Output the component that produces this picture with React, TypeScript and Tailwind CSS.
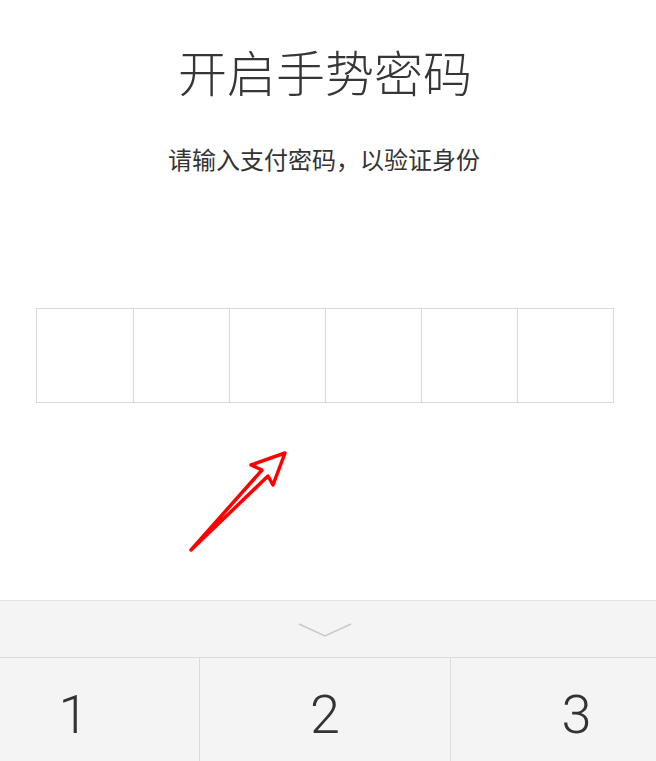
import React from 'react';

const cells = [0, 1, 2, 3, 4, 5];

export default function App() {
  return (
    <div
      className="relative w-[656px] h-[761px] overflow-hidden bg-white flex flex-col"
      style={{ fontFamily: '"Noto Sans CJK SC", "Noto Sans", sans-serif' }}
    >
      <h1 className="mt-[46px] pr-[6px] text-center text-[49px] leading-none font-light text-[#363636]">
        开启手势密码
      </h1>
      <p className="mt-[52px] pr-[8px] text-center text-[24px] leading-none text-[#333]">
        请输入支付密码，以验证身份
      </p>

      {/* password cells */}
      <div className="mt-[137px] ml-[36px] w-[578px] h-[95px] grid grid-cols-6 border border-[#dadada]">
        {cells.map((i) => (
          <div key={i} className={i === 0 ? '' : 'border-l border-[#dadada]'} />
        ))}
      </div>

      {/* keyboard */}
      <div className="mt-auto h-[161px] bg-[#f4f4f4] border-t border-[#e2e2e2] flex flex-col">
        <div className="h-[56px] flex items-center justify-center pr-[6px]">
          <svg width="56" height="18" viewBox="0 0 56 18" fill="none">
            <path d="M2 4 L28 16 L54 4" stroke="#c9c9c9" strokeWidth="1.5" />
          </svg>
        </div>
        <div
          className="flex-1 grid grid-cols-[199px_251px_1fr] border-t border-[#dcdcdc] text-[54px] font-light text-[#333]"
          style={{ fontFamily: 'Roboto, "Noto Sans", sans-serif' }}
        >
          <div className="flex items-center justify-center pr-[52px] pt-[10px]">1</div>
          <div className="flex items-center justify-center border-l border-[#dcdcdc] pt-[10px]">2</div>
          <div className="flex items-center justify-center border-l border-[#dcdcdc] pl-[46px] pt-[10px]">3</div>
        </div>
      </div>

      {/* red annotation arrow */}
      <svg
        className="absolute left-0 top-0 pointer-events-none"
        width="656"
        height="761"
        viewBox="0 0 656 761"
        fill="none"
      >
        <path
          d="M191 550 L262 470 L251 465 L285 453 L273 485 L268 476 Z"
          stroke="#ff0000"
          strokeWidth="3.5"
          strokeLinejoin="round"
          strokeLinecap="round"
        />
      </svg>
    </div>
  );
}
